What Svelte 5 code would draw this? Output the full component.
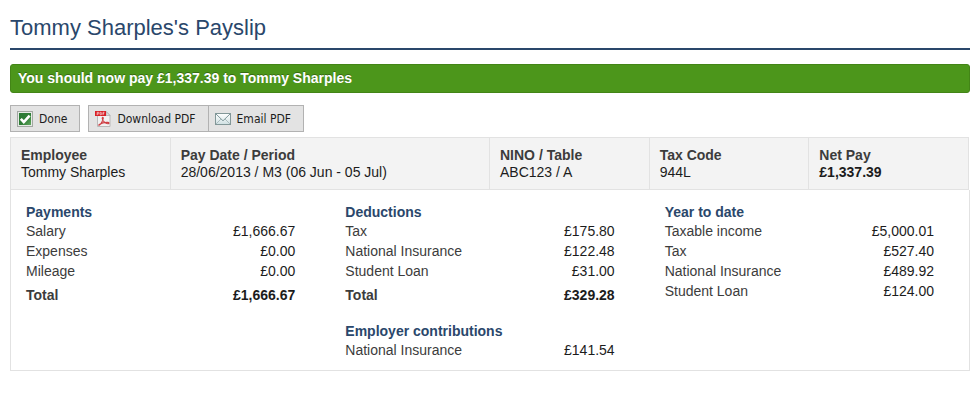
<script>
  const summary = [
    { label: 'Employee', value: 'Tommy Sharples' },
    { label: 'Pay Date / Period', value: '28/06/2013 / M3 (06 Jun - 05 Jul)', wide: true },
    { label: 'NINO / Table', value: 'ABC123 / A' },
    { label: 'Tax Code', value: '944L' },
    { label: 'Net Pay', value: '£1,337.39', strong: true }
  ];

  const columns = [
    [
      {
        title: 'Payments',
        rows: [['Salary', '£1,666.67'], ['Expenses', '£0.00'], ['Mileage', '£0.00']],
        total: '£1,666.67'
      }
    ],
    [
      {
        title: 'Deductions',
        rows: [['Tax', '£175.80'], ['National Insurance', '£122.48'], ['Student Loan', '£31.00']],
        total: '£329.28'
      },
      { title: 'Employer contributions', rows: [['National Insurance', '£141.54']] }
    ],
    [
      {
        title: 'Year to date',
        rows: [
          ['Taxable income', '£5,000.01'],
          ['Tax', '£527.40'],
          ['National Insurance', '£489.92'],
          ['Student Loan', '£124.00']
        ]
      }
    ]
  ];
</script>

<main>
  <h1>Tommy Sharples's Payslip</h1>
  <p class="notice" role="status">You should now pay £1,337.39 to Tommy Sharples</p>

  <div class="toolbar">
    <button type="button">
      <svg viewBox="0 0 16 16" aria-hidden="true">
        <defs>
          <linearGradient id="tick-fill" x1="0" y1="0" x2="1" y2="1">
            <stop offset="0" stop-color="#2c7a35" />
            <stop offset="0.55" stop-color="#2f7d37" />
            <stop offset="1" stop-color="#63a85f" />
          </linearGradient>
        </defs>
        <rect x="0.5" y="0.5" width="15" height="15" fill="#e6eae6" stroke="#a3a8a3" />
        <rect x="2" y="2" width="12" height="12" fill="url(#tick-fill)" />
        <path d="M3.8 7.8 6.8 11 12.6 4.6" fill="none" stroke="#fff" stroke-width="2.6" />
      </svg>
      Done
    </button>
    <div class="group">
      <button type="button">
        <svg viewBox="0 0 16 16" aria-hidden="true">
          <path d="M2.5.5h8.6l3.9 4v11H2.5z" fill="#f1f1f1" stroke="#b9b9b9" />
          <path d="M11 .5v4h4z" fill="#ddd" stroke="#aaa" stroke-width=".7" />
          <rect width="11" height="5" fill="#d81f26" />
          <path d="M2.2 4.1V1.3h1.1q.8 0 .8.8t-.8.8H2.2M5.2 1.3v2.5h.5q1 0 1-1.2t-1-1.3zM8 4.1V1.3h1.5M8 2.7h1.2" fill="none" stroke="#fff" stroke-width=".6" />
          <path d="M4.2 14.3c1.2-.3 3.8-4.6 4.1-7 .1-1.2-1.3-1.2-1.1.1.4 2.4 3.1 5.2 5.6 5.4 1.7.1 1.6-1.3-.2-1.4-2.5-.1-6.6 1-8.3 2.1-.8.5-.6.9-.1.8z" fill="none" stroke="#cf3f45" stroke-width="1.1" />
        </svg>
        Download PDF
      </button>
      <button type="button">
        <svg viewBox="0 0 16 16" aria-hidden="true">
          <defs>
            <linearGradient id="mail-fill" x1="0" y1="0" x2="0" y2="1">
              <stop offset="0" stop-color="#fff" />
              <stop offset="1" stop-color="#cfe0e2" />
            </linearGradient>
          </defs>
          <rect x="0.5" y="2.5" width="15" height="11" fill="url(#mail-fill)" stroke="#829798" />
          <path d="M1 13 6 8M15 13l-5-5" fill="none" stroke="#a6b8ba" stroke-width=".9" />
          <path d="M1 3l7 6.8L15 3" fill="none" stroke="#81999c" stroke-width="1" />
        </svg>
        Email PDF
      </button>
    </div>
  </div>

  <dl class="summary">
    {#each summary as item}
      <div class:wide={item.wide}>
        <dt>{item.label}</dt>
        <dd class:strong={item.strong}>{item.value}</dd>
      </div>
    {/each}
  </dl>

  <div class="details">
    {#each columns as sections}
      <div class="column">
        {#each sections as section}
          <section>
            <h2>{section.title}</h2>
            <table aria-label={section.title}>
              <tbody>
                {#each section.rows as [name, amount]}
                  <tr><th scope="row">{name}</th><td>{amount}</td></tr>
                {/each}
                {#if section.total}
                  <tr class="total"><th scope="row">Total</th><td>{section.total}</td></tr>
                {/if}
              </tbody>
            </table>
          </section>
        {/each}
      </div>
    {/each}
  </div>
</main>

<style>
  :global(body) {
    margin: 0;
    background: #fff;
  }

  main {
    padding: 13px 10px 32px;
    color: #1c1c1c;
    font: 14px/18px "Liberation Sans", Arial, sans-serif;
  }

  h1 {
    margin: 0 0 14px;
    padding-bottom: 5px;
    border-bottom: 2px solid #2a476b;
    color: #2a476b;
    font-size: 22px;
    font-weight: 400;
    line-height: 30px;
  }

  .notice {
    margin: 0 0 12px;
    padding: 4px 7px 5px;
    border: 1px solid #438517;
    border-radius: 3px;
    background: #4c961b;
    color: #fff;
    font-weight: 700;
    text-shadow: 0 -1px 0 rgba(0, 0, 0, 0.3);
  }

  .toolbar {
    display: flex;
    gap: 8px;
    margin-bottom: 5px;
  }

  .group {
    display: flex;
  }

  .group button + button {
    margin-left: -1px;
  }

  button {
    display: flex;
    align-items: center;
    gap: 6px;
    height: 27px;
    padding: 0 12px 0 6px;
    border: 1px solid #b2b2b2;
    border-radius: 0;
    background: #e3e3e3;
    color: #1c1c1c;
    font: 12px/16px "DejaVu Sans Condensed", "Noto Sans", sans-serif;
  }

  svg {
    width: 16px;
    height: 16px;
  }

  .summary {
    display: grid;
    grid-template-columns: repeat(6, 1fr);
    margin: 0 1px 0 0;
    border: solid #e2e2e2;
    border-width: 1px 0 1px 1px;
    background: #f3f3f3;
  }

  .summary div {
    padding: 9px 10px 8px;
    border-right: 1px solid #e2e2e2;
    line-height: 17px;
  }

  .summary .wide {
    grid-column: span 2;
  }

  dt {
    color: #3c3c3c;
    font-weight: 700;
  }

  dd {
    margin: 0;
  }

  .strong {
    font-weight: 700;
  }

  .details {
    display: flex;
    border: solid #e2e2e2;
    border-width: 0 1px 1px;
  }

  .column {
    box-sizing: border-box;
    flex: 1 1 0;
    padding: 13px 35px 10px 15px;
  }

  section + section {
    margin-top: 17px;
  }

  h2 {
    margin: 0;
    color: #2a476b;
    font-size: 14px;
    line-height: 18px;
  }

  table {
    width: 100%;
    border-collapse: collapse;
  }

  th,
  td {
    padding: 0;
    line-height: 20px;
  }

  th {
    color: #3c3c3c;
    font-weight: 400;
    text-align: left;
  }

  td {
    text-align: right;
  }

  .total th,
  .total td {
    padding-top: 4px;
    font-weight: 700;
  }
</style>
